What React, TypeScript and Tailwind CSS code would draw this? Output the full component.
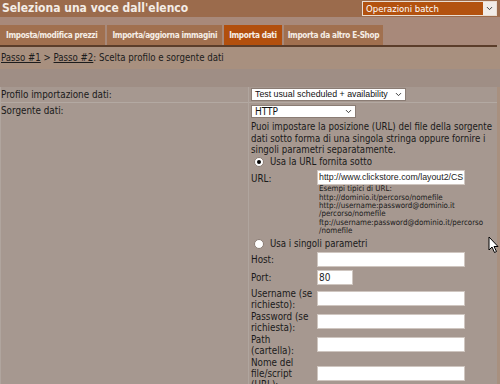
import { ChevronDown } from 'lucide-react';

function FakeSelect({ label, width, dark, textClass }: { label: string; width: string; dark?: boolean; textClass: string }) {
  return (
    <div
      className={`flex items-center justify-between border ${width} ${
        dark ? 'h-[15px] bg-[#b3520f] border-[#e9ddd2] text-white' : 'h-[13px] bg-white border-[#8a7c74] text-[#111]'
      }`}
    >
      <span className={`pl-[3px] whitespace-nowrap ${textClass}`}>{label}</span>
      <span
        className={`flex items-center justify-center h-full w-[13px] ${
          dark ? 'bg-[#f1ece8] text-[#333]' : 'text-[#333]'
        }`}
      >
        <ChevronDown size={9} strokeWidth={2.5} />
      </span>
    </div>
  );
}

function Radio({ checked, label }: { checked?: boolean; label: string }) {
  return (
    <div className="flex items-center gap-[6px] pl-[3px] h-[10px]">
      <span className="flex items-center justify-center w-[10px] h-[10px] rounded-full bg-white border border-[#8a7c74]">
        {checked && <span className="w-[4px] h-[4px] rounded-full bg-black" />}
      </span>
      <span className="text-[9.6px] leading-[10px] text-[#1a1a1a]">{label}</span>
    </div>
  );
}

function Field({ label, value, small, rowH }: { label: string; value?: string; small?: boolean; rowH: string }) {
  return (
    <div className={`flex items-center gap-[2px] ${rowH}`}>
      <div className="w-[64px] text-[9.8px] leading-[11px] text-[#1a1a1a]">{label}</div>
      <div
        className={`h-[15px] bg-white border border-[#cfc6c0] text-[10px] leading-[13px] pl-[1px] text-[#222] ${
          small ? 'w-[36px]' : 'w-[148px]'
        }`}
      >
        {value}
      </div>
    </div>
  );
}

export default function App() {
  return (
    <div className="relative w-[500px] h-[384px] overflow-hidden bg-[#a8907f] font-['DejaVu_Sans_Condensed','DejaVu_Sans',sans-serif]">
      <div className="flex items-start justify-between h-[17px] bg-[#9b6b4c] pl-[2px] pr-[3px]">
        <span className="text-[12px] leading-[17px] font-bold text-[#f4ede6]">Seleziona una voce dall'elenco</span>
        <div className="mt-[1px]">
          <FakeSelect label="Operazioni batch" width="w-[135px]" dark textClass="text-[9.5px] leading-[13px]" />
        </div>
      </div>
      <div className="h-[8px] bg-[#a8897a]" />
      <div className="flex gap-[2px] h-[20px] bg-[#a8897a] text-[8.2px] tracking-[-0.35px] font-bold text-[#f6eee6] leading-[20px]">
        <span className="pl-[6px] pr-[8px] bg-[#a1704f]">Imposta/modifica prezzi</span>
        <span className="px-[5px] bg-[#a1704f]">Importa/aggiorna immagini</span>
        <span className="px-[5px] bg-[#b24f0d]">Importa dati</span>
        <span className="px-[4px] bg-[#a1704f]">Importa da altro E-Shop</span>
      </div>
      <div className="h-[2px] mr-[3px] bg-[#5b3d2a]" />
      <div className="h-[22px] flex items-center pl-[1px] text-[9.6px] text-[#1c1c1c]">
        <span className="underline">Passo #1</span>
        <span>&nbsp;&gt;&nbsp;</span>
        <span className="underline">Passo #2</span>
        <span>: Scelta profilo e sorgente dati</span>
      </div>
      <div className="h-[18px] bg-[#9f8e85]" />
      <div className="mr-[3px] bg-[#a69890] border-l border-[#b0a59e] text-[9.8px] text-[#1a1a1a]">
        <div className="grid grid-cols-[248px_248px] h-[16px] border-b border-[#b3a9a2]">
          <div className="leading-[16px] border-r border-[#b0a59e]">Profilo importazione dati:</div>
          <div className="pl-[2px] pt-[1px]">
            <FakeSelect
              label="Test usual scheduled + availability"
              width="w-[155px]"
              textClass="text-[8.8px] leading-[11px] font-['Liberation_Sans',sans-serif]"
            />
          </div>
        </div>
        <div className="grid grid-cols-[248px_248px]">
          <div className="leading-[16px] border-r border-[#b0a59e]">Sorgente dati:</div>
          <div className="pl-[2px] pt-[2px] flex flex-col">
            <FakeSelect label="HTTP" width="w-[105px]" textClass="text-[10px] leading-[11px]" />
            <p className="mt-[3px] leading-[11.7px] text-[9.6px] w-[246px]">
              Puoi impostare la posizione (URL) del file della sorgente dati sotto forma di una singola stringa oppure fornire i
              singoli parametri separatamente.
            </p>
            <div className="mt-[1px]">
              <Radio checked label="Usa la URL fornita sotto" />
            </div>
            <div className="flex items-start gap-[2px] mt-[3px]">
              <div className="w-[64px] leading-[11px] pt-[3px]">URL:</div>
              <div className="flex flex-col">
                <div className="w-[148px] h-[15px] bg-white border border-[#cfc6c0] text-[8.8px] leading-[13px] pl-[1px] overflow-hidden whitespace-nowrap font-['Liberation_Sans',sans-serif] text-[#222]">
                  http://www.clickstore.com/layout2/CS
                </div>
                <div className="pl-[2px] text-[7.9px] leading-[8.4px] text-[#1a1a1a] whitespace-nowrap">
                  Esempi tipici di URL:
                  <br />
                  http://dominio.it/percorso/nomefile
                  <br />
                  http://username:password@dominio.it
                  <br />
                  /percorso/nomefile
                  <br />
                  ftp://username:password@dominio.it/percorso
                  <br />
                  /nomefile
                </div>
              </div>
            </div>
            <div className="mt-[3px]">
              <Radio label="Usa i singoli parametri" />
            </div>
            <div className="flex flex-col gap-[1px] mt-[3px]">
              <Field label="Host:" rowH="h-[16px]" />
              <Field label="Port:" value="80" small rowH="h-[18px]" />
              <Field label="Username (se richiesto):" rowH="h-[22px]" />
              <Field label="Password (se richiesta):" rowH="h-[22px]" />
              <Field label="Path (cartella):" rowH="h-[22px]" />
              <Field label="Nome del file/script (URL):" rowH="h-[34px]" />
            </div>
          </div>
        </div>
      </div>
      <svg className="absolute left-[488px] top-[236px]" width="12" height="18" viewBox="0 0 12 18">
        <path d="M1 1 L1 14 L4 11 L6.5 16.5 L8.5 15.5 L6 10.5 L10 10.5 Z" fill="white" stroke="black" strokeWidth="1" />
      </svg>
    </div>
  );
}
